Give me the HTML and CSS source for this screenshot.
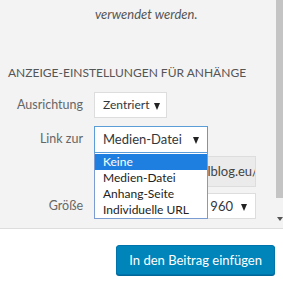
FILE: index.html
```html
<!DOCTYPE html>
<html lang="de">
<head>
  <meta charset="UTF-8">
  <title>Anhang-Details</title>
  <link rel="stylesheet" href="styles.css">
</head>
<body>

<div class="panel">
  <div class="content">
    <p class="note">verwendet werden.</p>
    <h3 class="heading">Anzeige-Einstellungen für Anhänge</h3>

    <div class="setting">
      <span class="label">Ausrichtung</span>
      <div class="select short">Zentriert <span class="arrow"></span></div>
    </div>

    <div class="setting link-row">
      <span class="label">Link zur</span>
      <div class="field">
        <div class="select medium focused">Medien-Datei <span class="arrow"></span></div>
        <div class="url"><span>https://www.beispielblog.eu/</span></div>
        <ul class="dropdown">
          <li class="active">Keine</li>
          <li>Medien-Datei</li>
          <li>Anhang-Seite</li>
          <li>Individuelle URL</li>
        </ul>
      </div>
    </div>

    <div class="setting">
      <span class="label">Größe</span>
      <div class="select wide"><span class="value">Groß – 1280 × 960</span> <span class="arrow"></span></div>
    </div>
  </div>

  <div class="scrollbar">
    <div class="thumb"></div>
    <div class="scroll-arrow"></div>
  </div>
</div>

<div class="toolbar">
  <button class="button-primary">In den Beitrag einfügen</button>
</div>

</body>
</html>
```

FILE: styles.css
```css
html, body {
  margin: 0;
  padding: 0;
  height: 100%;
  overflow: hidden;
  background-color: white;
  font-family: Lato, "Open Sans", sans-serif;
  font-size: 12px;
  color: #444;
}

.panel {
  display: flex;
  height: 228px;
  background-color: #f3f3f3;
  border-bottom: 1px solid #dddddd;
}

.content {
  flex: 1;
  padding: 4px 0 0 8px;
  min-width: 0;
}

.note {
  margin: 0 0 0 87px;
  line-height: 20px;
  font-size: 13px;
  font-style: italic;
  color: #555;
}

.heading {
  margin: 39px 0 0 0;
  line-height: 20px;
  font-size: 12px;
  font-weight: 400;
  text-transform: uppercase;
  color: #555;
}

.setting {
  display: grid;
  grid-template-columns: 75px auto;
  column-gap: 11px;
  align-items: start;
  margin-top: 8px;
}

.setting:first-of-type {
  margin-top: 9px;
}

.label {
  text-align: right;
  line-height: 26px;
  font-size: 12.5px;
  color: #666;
}

.field {
  position: relative;
}

.select {
  box-sizing: border-box;
  height: 26px;
  line-height: 24px;
  padding: 0 8px;
  background-color: white;
  border: 1px solid #dddddd;
  font-size: 12.5px;
  color: #32373c;
  white-space: nowrap;
  overflow: hidden;
  position: relative;
}

.arrow {
  position: absolute;
  right: 8px;
  top: 10px;
  border-left: 3.5px solid transparent;
  border-right: 3.5px solid transparent;
  border-top: 7px solid #222;
}

.short {
  width: 73px;
  font-size: 12px;
}

.short .arrow {
  right: 6px;
}

.medium {
  width: 114px;
  font-size: 13px;
}

.focused {
  height: 27px;
  border-color: #5b9dd9;
}

.wide {
  width: 162px;
  display: flex;
  justify-content: flex-end;
  padding-right: 22px;
  font-size: 13px;
}

.url {
  box-sizing: border-box;
  display: flex;
  justify-content: flex-end;
  width: 162px;
  height: 31px;
  margin-top: 3px;
  padding: 0 0 0 8px;
  line-height: 29px;
  background-color: #ebebeb;
  border: 1px solid #dddddd;
  font-size: 13px;
  color: #444;
  white-space: nowrap;
  overflow: hidden;
}

.url span {
  flex-shrink: 0;
  margin-right: -3px;
}

.link-row + .setting {
  margin-top: 6px;
}

.dropdown {
  position: absolute;
  top: 27px;
  left: 0;
  box-sizing: border-box;
  width: 114px;
  margin: 0;
  padding: 1px 0 0 0;
  list-style: none;
  background-color: white;
  border: 1px solid #7a9cd3;
  border-top: none;
  z-index: 2;
}

.dropdown li {
  height: 16px;
  line-height: 16px;
  padding-left: 8px;
  font-size: 12px;
  color: #222;
  white-space: nowrap;
}

.dropdown li.active {
  background-color: #1e7fe0;
  color: white;
}

.scrollbar {
  width: 7px;
  display: flex;
  flex-direction: column;
  align-items: center;
}

.thumb {
  width: 7px;
  height: 198px;
  background-color: #c4c4c4;
}

.scroll-arrow {
  margin-top: 19px;
  border-left: 3px solid transparent;
  border-right: 3px solid transparent;
  border-top: 4px solid #555;
}

.toolbar {
  display: flex;
  justify-content: flex-end;
  padding: 16px 8px 0 0;
}

.button-primary {
  height: 30px;
  padding: 0 12px;
  font-family: inherit;
  font-size: 13px;
  white-space: nowrap;
  color: white;
  background-color: #0085ba;
  border: 1px solid #0073aa;
  border-radius: 3px;
  box-shadow: 0 1px 0 #006799;
}
```
